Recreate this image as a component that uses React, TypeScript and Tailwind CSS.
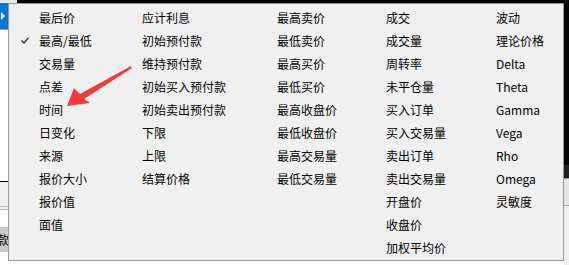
const columns: string[][] = [
  ['最后价', '最高/最低', '交易量', '点差', '时间', '日变化', '来源', '报价大小', '报价值', '面值'],
  ['应计利息', '初始预付款', '维持预付款', '初始买入预付款', '初始卖出预付款', '下限', '上限', '结算价格'],
  ['最高卖价', '最低卖价', '最高买价', '最低买价', '最高收盘价', '最低收盘价', '最高交易量', '最低交易量'],
  ['成交', '成交量', '周转率', '未平仓量', '买入订单', '买入交易量', '卖出订单', '卖出交易量', '开盘价', '收盘价', '加权平均价'],
  ['波动', '理论价格', 'Delta', 'Theta', 'Gamma', 'Vega', 'Rho', 'Omega', '灵敏度'],
];

const widths = ['w-[103px]', 'w-[135px]', 'w-[109px]', 'w-[110px]', 'flex-1'];

function CheckMark() {
  return (
    <svg width="8" height="7" viewBox="0 0 8 7" className="absolute left-[12px] top-[8px]">
      <path d="M0.5 3.5 L3 6 L7.5 0.8" fill="none" stroke="#222" strokeWidth="1.2" />
    </svg>
  );
}

function MenuColumn({ items, width, colIndex }: { items: string[]; width: string; colIndex: number }) {
  return (
    <div className={`${width} flex flex-col`}>
      {items.map((label, i) => (
        <div key={label} className="relative h-[23px] pl-[30px] flex items-center text-[12px] text-black whitespace-nowrap">
          {colIndex === 0 && i === 1 && <CheckMark />}
          {label}
        </div>
      ))}
    </div>
  );
}

export default function App() {
  return (
    <div
      className="relative w-[569px] h-[265px] overflow-hidden flex bg-white"
      style={{ fontFamily: '"Noto Sans CJK SC", "Microsoft YaHei", sans-serif' }}
    >
      {/* left edge of the window behind */}
      <div className="w-[8px] flex flex-col">
        <div className="h-[3px] bg-[#e8e8e8]" />
        <div className="h-[26px] bg-[#0078d7] flex items-center">
          <svg width="5" height="8" viewBox="0 0 5 8" className="ml-[1px]">
            <path d="M0 0 L4 4 L0 8 Z" fill="#fff" />
          </svg>
        </div>
        <div className="h-[1px] bg-[#a0a0a0]" />
        <div className="h-[151px] bg-white" />
        <div className="h-[1px] bg-black" />
        <div className="h-[24px] bg-[#f0f0f0]" />
        <div className="h-[1px] bg-[#b4b4b4]" />
        <div className="h-[2px] bg-[#f0f0f0]" />
        <div className="h-[1px] bg-[#b4b4b4]" />
        <div className="h-[17px] bg-white" />
        <div className="h-[25px] bg-[#c8c8c8] overflow-hidden flex items-center">
          <span className="text-[12px] text-black -ml-[3px] leading-none">款</span>
        </div>
        <div className="flex-1 bg-white" />
      </div>

      {/* menu area */}
      <div className="w-[556px] flex flex-col">
        <div className="h-[3px] flex">
          <div className="w-[9px] bg-[#e8e8e8]" />
          <div className="flex-1 bg-black" />
        </div>
        <div className="h-[258px] border border-[#979797] bg-[#f0f0f0] shadow-[2px_2px_2px_rgba(0,0,0,0.35)] pt-[2px] flex">
          {columns.map((items, i) => (
            <MenuColumn key={i} items={items} width={widths[i]} colIndex={i} />
          ))}
        </div>
        <div className="flex-1 bg-white" />
      </div>

      {/* right edge of the window behind */}
      <div className="flex-1 flex flex-col">
        <div className="h-[165px] bg-black" />
        <div className="h-[13px] bg-[#202020]" />
        <div className="h-[1px] bg-[#a0a0a0]" />
        <div className="h-[26px] bg-[#e6e6e6]" />
        <div className="h-[1px] bg-[#a0a0a0]" />
        <div className="flex-1 bg-[#f0f0f0]" />
      </div>

      {/* red annotation arrow */}
      <svg width="569" height="265" className="absolute left-0 top-0 pointer-events-none">
        <polygon points="67,106 74,88 80,94 131,66 132,68 84,99 90,103" fill="#f23a3a" />
      </svg>
    </div>
  );
}
